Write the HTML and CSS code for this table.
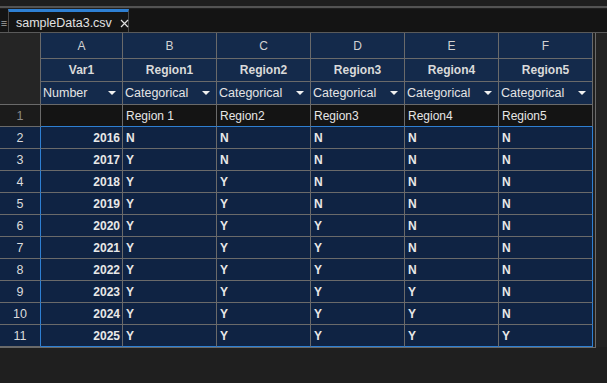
FILE: index.html
```html
<!DOCTYPE html>
<html lang="en">
<head>
    <meta charset="UTF-8">
    <title>sampleData3.csv</title>
    <link rel="stylesheet" href="styles.css">
</head>
<body>
    <div class="topbar"></div>
    <div class="tabbar">
        <span class="menu-icon">&#8801;</span>
        <div class="tab">
            <span class="tab-name">sampleData3.csv</span>
            <svg class="tab-close" width="9" height="9" viewBox="0 0 9 9">
                <path d="M1 1 L8 8 M8 1 L1 8" stroke="#e0e0e0" stroke-width="1.2" fill="none"/>
            </svg>
        </div>
    </div>

    <div class="sheet">
        <div class="grid-frame">
            <table class="grid">
                <colgroup>
                    <col class="col-rownum">
                    <col class="col-a">
                    <col class="col-b"><col class="col-b"><col class="col-b"><col class="col-b"><col class="col-b">
                </colgroup>
                <tr class="letters">
                    <td class="corner"></td>
                    <td>A</td><td>B</td><td>C</td><td>D</td><td>E</td><td>F</td>
                </tr>
                <tr class="names">
                    <td class="corner"></td>
                    <td>Var1</td><td>Region1</td><td>Region2</td><td>Region3</td><td>Region4</td><td>Region5</td>
                </tr>
                <tr class="types">
                    <td class="corner"></td>
                    <td><div class="type">Number<span class="caret"></span></div></td>
                    <td><div class="type">Categorical<span class="caret"></span></div></td>
                    <td><div class="type">Categorical<span class="caret"></span></div></td>
                    <td><div class="type">Categorical<span class="caret"></span></div></td>
                    <td><div class="type">Categorical<span class="caret"></span></div></td>
                    <td><div class="type">Categorical<span class="caret"></span></div></td>
                </tr>
                <tr class="first-row">
                    <td class="rownum">1</td>
                    <td></td><td>Region 1</td><td>Region2</td><td>Region3</td><td>Region4</td><td>Region5</td>
                </tr>
                <tr class="data"><td class="rownum">2</td><td class="num">2016</td><td>N</td><td>N</td><td>N</td><td>N</td><td>N</td></tr>
                <tr class="data"><td class="rownum">3</td><td class="num">2017</td><td>Y</td><td>N</td><td>N</td><td>N</td><td>N</td></tr>
                <tr class="data"><td class="rownum">4</td><td class="num">2018</td><td>Y</td><td>Y</td><td>N</td><td>N</td><td>N</td></tr>
                <tr class="data"><td class="rownum">5</td><td class="num">2019</td><td>Y</td><td>Y</td><td>N</td><td>N</td><td>N</td></tr>
                <tr class="data"><td class="rownum">6</td><td class="num">2020</td><td>Y</td><td>Y</td><td>Y</td><td>N</td><td>N</td></tr>
                <tr class="data"><td class="rownum">7</td><td class="num">2021</td><td>Y</td><td>Y</td><td>Y</td><td>N</td><td>N</td></tr>
                <tr class="data"><td class="rownum">8</td><td class="num">2022</td><td>Y</td><td>Y</td><td>Y</td><td>N</td><td>N</td></tr>
                <tr class="data"><td class="rownum">9</td><td class="num">2023</td><td>Y</td><td>Y</td><td>Y</td><td>Y</td><td>N</td></tr>
                <tr class="data"><td class="rownum">10</td><td class="num">2024</td><td>Y</td><td>Y</td><td>Y</td><td>Y</td><td>N</td></tr>
                <tr class="data last"><td class="rownum">11</td><td class="num">2025</td><td>Y</td><td>Y</td><td>Y</td><td>Y</td><td>Y</td></tr>
            </table>
        </div>
        <div class="side"></div>
    </div>
</body>
</html>
```

FILE: styles.css
```css
body {
    margin: 0;
    padding: 0;
    background: #1f1f1f;
    font-family: "Liberation Sans", Arial, sans-serif;
    color: #e0e0e0;
    width: 607px;
    height: 383px;
    overflow: hidden;
}

.topbar {
    height: 6px;
    background: #1e1e1e;
    border-bottom: 2px solid #535353;
}

.tabbar {
    display: flex;
    height: 23px;
    margin-top: 1px;
    background: #141414;
    border-bottom: 1px solid #5a5a5a;
}

.menu-icon {
    width: 8px;
    font-size: 11px;
    line-height: 23px;
    padding-top: 3px;
    color: #a0a0a0;
    text-align: center;
    box-sizing: border-box;
}

.tab {
    display: flex;
    align-items: center;
    width: 121px;
    border-left: 1px solid #4a4a4a;
    border-right: 1px solid #4a4a4a;
    border-top: 3px solid #2e7fd2;
    box-sizing: border-box;
    height: 23px;
    padding: 0 0 0 7px;
    background: #141414;
}

.tab-name {
    font-size: 12.5px;
    color: #e2e2e2;
    padding-top: 1px;
    white-space: nowrap;
}

.tab-close {
    flex-shrink: 0;
    margin-left: 8px;
    margin-top: 2px;
}

.sheet {
    display: flex;
}

.grid-frame {
    padding-right: 2px;
    border-right: 1px solid #6a6a6a;
    border-bottom: 1px solid #6a6a6a;
    background: #1f1f1f;
}

.side {
    flex: 1;
    background: #232323;
    height: 314px;
}

.grid {
    border-collapse: separate;
    border-spacing: 0;
    table-layout: fixed;
    width: 593px;
    font-size: 12px;
}

.col-rownum { width: 41px; }
.col-a { width: 82px; }
.col-b { width: 94px; }

.grid td {
    padding: 0 3px;
    border-right: 1px solid #6a6a6a;
    border-bottom: 1px solid #6a6a6a;
    white-space: nowrap;
    overflow: hidden;
    vertical-align: middle;
    height: 21px;
    line-height: 14px;
}

/* header rows */
.letters td,
.names td,
.types td {
    background: #142a4b;
    text-align: center;
    color: #d2d2d2;
}

.letters td { height: 24px; padding-top: 1px; }
.names td { height: 22px; font-weight: bold; color: #dadada; }
.types td { height: 22px; text-align: left; padding: 0 2px; color: #e4e4e4; font-size: 12.5px; }

.grid td.corner {
    background: #252525;
    border-bottom: none;
}

.types td.corner {
    border-bottom: 1px solid #6a6a6a;
}

.type {
    display: flex;
    align-items: center;
    justify-content: space-between;
}

.caret {
    width: 0;
    height: 0;
    margin-right: 4px;
    border-left: 4px solid transparent;
    border-right: 4px solid transparent;
    border-top: 4px solid #f0f0f0;
}

/* first data row with the raw names */
.first-row td {
    background: #141414;
    color: #e6e6e6;
    border-bottom-color: #2e7fd2;
}

.first-row td.rownum {
    background: #1b1b1b;
    color: #8a8a8a;
    border-bottom-color: #6a6a6a;
}

/* data */
.data td {
    background: #0f2343;
    font-weight: bold;
    color: #e8e8e8;
}

.data td:last-child {
    border-right-color: #2e7fd2;
}

.data.last td {
    border-bottom-color: #2e7fd2;
}

.grid td.rownum {
    text-align: center;
    font-weight: normal;
    font-size: 12.5px;
    padding: 0;
}

.data td.rownum {
    color: #dcdcdc;
    border-right-color: #2e7fd2;
}

.data.last td.rownum {
    border-bottom-color: #6a6a6a;
}

.grid td.num {
    text-align: right;
    padding-right: 2px;
}
```
